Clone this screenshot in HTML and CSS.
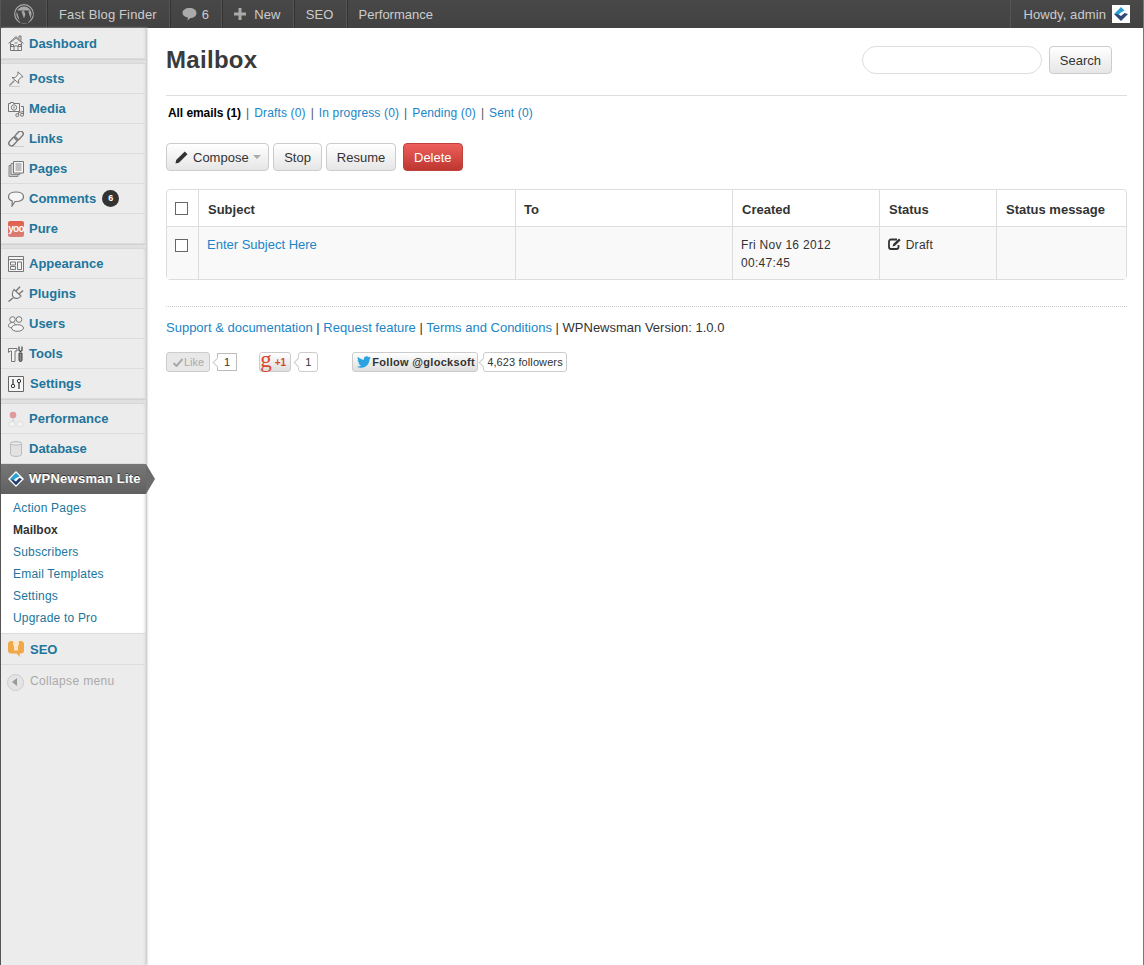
FILE: index.html
```html
<!DOCTYPE html>
<html lang="en">

<head>
  <meta charset="UTF-8">
  <meta name="viewport" content="width=device-width, initial-scale=1.0">
  <title>Mailbox</title>
  <link rel="stylesheet" href="styles.css">
</head>

<body>
  <div id="adminbar">
    <div class="bar-item bar-logo">
      <svg width="20" height="20" viewBox="0 0 20 20">
        <circle cx="10" cy="10" r="9.300" fill="none" stroke="#a8a8a8" stroke-width="1.200" />
        <circle cx="10" cy="10" r="7.600" fill="#a8a8a8" />
        <path d="M2.500 6.500h6.300v.8l-1.300.3 2.500 7 1.400-4.200-1-2.800-.9-.3v-.8h6v.8l-1.200.3 2.400 7 1.300-4.500 .8-1.500L19 11l-5.500 8.500h-7z" fill="#464646" />
      </svg>
    </div>
    <div class="bar-item">Fast Blog Finder</div>
    <div class="bar-item">
      <svg class="bar-icon" width="15" height="14" viewBox="0 0 15 14">
        <path d="M7.500 1c4 0 7 2 7 5s-3 5-6 5l-3 2.500.5-2.700C3 10 .5 8.500 .5 6c0-3 3-5 7-5z" fill="#aaa" />
      </svg>
      6
    </div>
    <div class="bar-item">
      <svg class="bar-icon plus" width="12" height="12" viewBox="0 0 12 12">
        <path d="M4.500 0h3v4.500H12v3H7.500V12h-3V7.500H0v-3h4.500z" fill="#aaa" />
      </svg>
      New
    </div>
    <div class="bar-item">SEO</div>
    <div class="bar-item bar-last">Performance</div>
    <div class="bar-item bar-account">
      Howdy, admin
      <svg class="avatar" width="18" height="18" viewBox="0 0 18 18">
        <rect width="18" height="18" fill="#fff" />
        <path d="M9 2l3.500 3.500L9 7.500 6 10 2 9z" fill="#2a9fd6" />
        <path d="M2 9l7 7 7-7-3.500-1L9 11 6 9z" fill="#2f4a7a" />
      </svg>
    </div>
  </div>

  <div id="layout">
    <div id="sidebar">
      <ul class="menu">
        <li class="menu-item menu-first">
          <svg class="menu-icon" width="16" height="16" viewBox="0 0 16 16">
            <path d="M11 3.500V1h2v4.500" fill="#ddd" stroke="#777" />
            <path d="M.5 8.500L8 1.500l7.500 7M2.500 7.500L8 3l5.500 4.500" fill="none" stroke="#777" />
            <path d="M2.500 8v7.500h11V8" fill="#f2f2f2" stroke="#777" />
            <path d="M6 15.500V11h4v4.500M3 9.500h2.500v2H3zM10.500 9.500H13v2h-2.500zM6.500 8h3" fill="none" stroke="#777" />
          </svg>
          <a href="#">Dashboard</a>
        </li>
      </ul>
      <div class="menu-sep"></div>
      <ul class="menu">
        <li class="menu-item">
          <svg class="menu-icon" width="16" height="16" viewBox="0 0 16 16">
            <path d="M10 .8l5 5-1.800.3-2.700 3 .3 3.200L4 6.500l3.100.2 2.700-3z" fill="#f2f2f2" stroke="#777" />
            <path d="M6.500 9.500L1.500 14.500" stroke="#888" stroke-width="1.300" />
            <path d="M1 15.500h11" stroke="#ccc" />
          </svg>
          <a href="#">Posts</a>
        </li>
        <li class="menu-item">
          <svg class="menu-icon" width="16" height="16" viewBox="0 0 16 16">
            <path d="M.5 2.500h2v-1h3v1h6v8H.5z" fill="#f2f2f2" stroke="#777" />
            <circle cx="6" cy="6.500" r="2.700" fill="none" stroke="#777" />
            <circle cx="6" cy="6.500" r="1" fill="#999" />
            <path d="M13 5.500h2.500v8M10.500 14v-2.500l5-1" fill="none" stroke="#777" />
            <circle cx="9.300" cy="14.200" r="1.500" fill="none" stroke="#777" />
            <circle cx="14" cy="13.800" r="1.500" fill="none" stroke="#777" />
          </svg>
          <a href="#">Media</a>
        </li>
        <li class="menu-item">
          <svg class="menu-icon" width="16" height="16" viewBox="0 0 16 16">
            <rect x="8.200" y="-.5" width="5.400" height="10" rx="2.700" transform="rotate(42 10.900 4.500)" fill="none" stroke="#777" stroke-width="1.400" />
            <rect x="2.400" y="5.500" width="5.400" height="10" rx="2.700" transform="rotate(42 5.100 10.500)" fill="none" stroke="#777" stroke-width="1.400" />
            <path d="M5 15.500h11" stroke="#ccc" />
          </svg>
          <a href="#">Links</a>
        </li>
        <li class="menu-item">
          <svg class="menu-icon" width="16" height="16" viewBox="0 0 16 16">
            <path d="M1 4.500h9v11H1z" fill="#ccc" stroke="#888" />
            <path d="M3 2.500h9v11H3z" fill="#ddd" stroke="#888" />
            <path d="M5.500 .5h10v11.500h-10z" fill="#f6f6f6" stroke="#777" />
            <path d="M7.500 3h6M7.500 5h6M7.500 7h6M7.500 9h6" stroke="#888" />
          </svg>
          <a href="#">Pages</a>
        </li>
        <li class="menu-item">
          <svg class="menu-icon" width="16" height="16" viewBox="0 0 16 16">
            <path d="M8 1c4.200 0 7.500 1.800 7.500 4.700S12.200 10.500 8.500 10.500H7L4 15l.3-5C2 9.300.5 7.800.5 5.700.5 2.800 3.800 1 8 1z" fill="#f6f6f6" stroke="#777" stroke-width="1.200" />
          </svg>
          <a href="#">Comments</a>
          <span class="count">6</span>
        </li>
        <li class="menu-item">
          <span class="yoo">yoo</span>
          <a href="#">Pure</a>
        </li>
      </ul>
      <div class="menu-sep"></div>
      <ul class="menu">
        <li class="menu-item">
          <svg class="menu-icon" width="16" height="16" viewBox="0 0 16 16">
            <path d="M.5 .5h15v15H.5zM.5 3.500h15" fill="#f4f4f4" stroke="#777" />
            <path d="M2.500 6h5v3h-5zM2.500 10.500h5v3h-5zM9.500 6h4v7.500h-4z" fill="none" stroke="#777" />
          </svg>
          <a href="#">Appearance</a>
        </li>
        <li class="menu-item">
          <svg class="menu-icon" width="16" height="16" viewBox="0 0 16 16">
            <path d="M6 3.500l7 6.500c-2 2.700-5.500 3-7.500 1.300C3.800 9.800 4 6 6 3.500z" fill="#f2f2f2" stroke="#777" stroke-width="1.200" />
            <path d="M8 5L12 .8M11 8l4.200-3.500M5 12L.5 15.500" fill="none" stroke="#777" stroke-width="1.400" />
          </svg>
          <a href="#">Plugins</a>
        </li>
        <li class="menu-item">
          <svg class="menu-icon" width="16" height="16" viewBox="0 0 16 16">
            <circle cx="4.500" cy="3.500" r="2.800" fill="#f4f4f4" stroke="#777" />
            <circle cx="11" cy="3.500" r="2.800" fill="#f4f4f4" stroke="#777" />
            <path d="M.5 10c0-2.500 2-3.500 4-3.500s3 1.500 3 3.500-7 2.500-7 0z" fill="#f4f4f4" stroke="#777" />
            <ellipse cx="9.500" cy="12" rx="6" ry="3.300" fill="#f4f4f4" stroke="#777" />
          </svg>
          <a href="#">Users</a>
        </li>
        <li class="menu-item">
          <svg class="menu-icon" width="16" height="16" viewBox="0 0 16 16">
            <path d="M.5 2.500h8.500v2.500H7v10.500H3.500V5H2L.5 6.500z" fill="#f4f4f4" stroke="#777" />
            <path d="M11 .5v4l1.500 1 1.500-1v-4" fill="none" stroke="#444" stroke-width="1.200" />
            <path d="M11 7h3v7a1.500 1.500 0 0 1-3 0z" fill="#888" stroke="#444" />
          </svg>
          <a href="#">Tools</a>
        </li>
        <li class="menu-item item-settings">
          <svg class="menu-icon" width="16" height="16" viewBox="0 0 16 16">
            <path d="M.5 .5h15v15H.5z" fill="#f6f6f6" stroke="#666" />
            <circle cx="5" cy="10" r="1.700" fill="none" stroke="#333" />
            <circle cx="11" cy="5" r="1.700" fill="none" stroke="#333" />
            <path d="M5 3v5.300M11 6.700V13" stroke="#333" stroke-width="1.200" />
          </svg>
          <a href="#">Settings</a>
        </li>
      </ul>
      <div class="menu-sep"></div>
      <ul class="menu">
        <li class="menu-item">
          <svg class="menu-icon" width="16" height="16" viewBox="0 0 16 16">
            <path d="M1 12l3-2 3 2v2.500l-3 1.500-3-1.500zM9 12l3-2 3 2v2.500l-3 1.500-3-1.500z" fill="#f4f4f4" stroke="#ddd" />
            <circle cx="5" cy="4" r="3.300" fill="#e09a9a" />
            <path d="M5 7v4" stroke="#ccc" />
          </svg>
          <a href="#">Performance</a>
        </li>
        <li class="menu-item">
          <svg class="menu-icon" width="16" height="16" viewBox="0 0 16 16">
            <path d="M2.500 2.500c0-2.500 11-2.500 11 0v11c0 2.500-11 2.500-11 0z" fill="#e2e2e2" stroke="#bbb" />
            <path d="M2.500 2.500c0 2 11 2 11 0" fill="#f4f4f4" stroke="#bbb" />
          </svg>
          <a href="#">Database</a>
        </li>
        <li class="menu-item menu-current">
          <svg class="menu-icon" width="16" height="16" viewBox="0 0 16 16">
            <path d="M8 0l8 8-8 8-8-8z" fill="#fff" />
            <path d="M8 1.800l3.700 3.700L8 7 5.500 9.500 2 8z" fill="#2a9fd6" />
            <path d="M2 8l6 6.200L14 8l-2.800-.9L8 10.500 5.500 9z" fill="#1f3a6e" />
          </svg>
          <a href="#">WPNewsman Lite</a>
        </li>
      </ul>
      <ul class="submenu">
        <li><a href="#">Action Pages</a></li>
        <li class="sub-current"><a href="#">Mailbox</a></li>
        <li><a href="#">Subscribers</a></li>
        <li><a href="#">Email Templates</a></li>
        <li><a href="#">Settings</a></li>
        <li><a href="#">Upgrade to Pro</a></li>
      </ul>
      <ul class="menu">
        <li class="menu-item item-seo">
          <svg class="menu-icon" width="16" height="16" viewBox="0 0 16 16">
            <path d="M3 0h10c2 0 3 1.500 3 3.500v6c0 2-1 3-3 3h-1.500l.5 3.500-3.500-3.500H3c-2 0-3-1-3-3v-6C0 1.500 1 0 3 0z" fill="#f0a848" />
            <path d="M5 0h6v3a3 3 0 0 1-1 2v4.500H6V5a3 3 0 0 1-1-2z" fill="#fbe7c8" />
          </svg>
          <a href="#">SEO</a>
        </li>
        <li class="menu-collapse">
          <span class="collapse-btn"><span class="collapse-arrow"></span></span>
          Collapse menu
        </li>
      </ul>
    </div>

    <div id="content">
      <div class="page-head">
        <h1>Mailbox</h1>
        <form class="search-box">
          <input type="text" class="search-input">
          <button type="button" class="btn">Search</button>
        </form>
      </div>

      <div class="filters">
        <b>All emails (1)</b><span class="pipe">|</span><a href="#">Drafts (0)</a><span class="pipe">|</span><a href="#">In progress (0)</a><span class="pipe">|</span><a href="#">Pending (0)</a><span class="pipe">|</span><a href="#">Sent (0)</a>
      </div>

      <div class="toolbar">
        <button type="button" class="btn btn-compose">
          <svg width="13" height="13" viewBox="0 0 13 13">
            <path d="M9.800.5l2.700 2.700-8.600 8.600L.5 12.500l.7-3.400z" fill="#333" />
          </svg>
          Compose
          <span class="caret"></span>
        </button>
        <button type="button" class="btn btn-stop">Stop</button>
        <button type="button" class="btn btn-resume">Resume</button>
        <button type="button" class="btn btn-danger">Delete</button>
      </div>

      <table class="mail-table">
        <thead>
          <tr>
            <th class="col-check"><span class="checkbox"></span></th>
            <th class="col-subject">Subject</th>
            <th class="col-to">To</th>
            <th class="col-created">Created</th>
            <th class="col-status">Status</th>
            <th>Status message</th>
          </tr>
        </thead>
        <tbody>
          <tr>
            <td class="col-check"><span class="checkbox"></span></td>
            <td><a href="#">Enter Subject Here</a></td>
            <td></td>
            <td class="cell-small">Fri Nov 16 2012 00:47:45</td>
            <td class="cell-small">
              <svg class="draft-icon" width="13" height="12" viewBox="0 0 13 12">
                <path d="M9 1.500H3A2 2 0 0 0 1 3.500v5.500a2 2 0 0 0 2 2h5.500a2 2 0 0 0 2-2V7" fill="none" stroke="#333" stroke-width="1.800" />
                <path d="M11 .5L12.700 2.200 7 7.800l-2.500.7.700-2.500z" fill="#333" />
              </svg>
              Draft
            </td>
            <td></td>
          </tr>
        </tbody>
      </table>

      <div class="footer-links">
        <a href="#">Support &amp; documentation</a> | <a href="#">Request feature</a> | <a href="#">Terms and Conditions</a> | WPNewsman Version: 1.0.0
      </div>

      <div class="social">
        <span class="like-btn">
          <svg width="10" height="9" viewBox="0 0 10 9">
            <path d="M.5 5l3 3L9.500 1" fill="none" stroke="#aaa" stroke-width="2" />
          </svg>
          Like
        </span>
        <span class="bubble bubble-square">1</span>
        <span class="gplus-btn"><span class="gplus-g">g</span><span class="gplus-one">+1</span></span>
        <span class="bubble bubble-gplus">1</span>
        <span class="tw-btn">
          <svg width="14" height="12" viewBox="0 0 16 13">
            <path d="M16 1.600c-.6.300-1.200.4-1.900.5.700-.4 1.200-1 1.400-1.800-.6.400-1.300.6-2.100.8C12.800.400 12 0 11 0 9.200 0 7.700 1.500 7.700 3.300c0 .3 0 .5.100.8C5.100 3.900 2.700 2.600 1.100.6.800 1.100.700 1.700.700 2.300c0 1.100.6 2.100 1.500 2.700-.5 0-1-.2-1.500-.4 0 1.600 1.100 2.900 2.600 3.200-.5.100-1 .2-1.500.1.400 1.300 1.600 2.200 3.100 2.300C3.300 11.400 1.700 12 0 11.800 1.500 12.700 3.200 13 5 13c6 0 9.300-5 9.300-9.300v-.4c.7-.4 1.200-1 1.700-1.700z" fill="#2aa3e0" />
          </svg>
          Follow @glocksoft
        </span>
        <span class="bubble bubble-followers">4,623 followers</span>
      </div>
    </div>
  </div>
</body>

</html>
```

FILE: styles.css
```css
html, body {
  height: 100%;
}

body {
  margin: 0;
  font-family: "Liberation Sans", Arial, sans-serif;
  font-size: 12px;
  color: #333;
  background: #fff;
  border-left: 1px solid #555;
  border-right: 1px solid #777;
  box-sizing: border-box;
  display: flex;
  flex-direction: column;
  overflow: hidden;
}

a {
  color: #21759b;
  text-decoration: none;
}

ul {
  list-style: none;
  margin: 0;
  padding: 0;
}

/* Top admin bar */
#adminbar {
  height: 28px;
  flex: none;
  display: flex;
  background: linear-gradient(#484848, #424242);
  color: #ccc;
  font-size: 13px;
  letter-spacing: 0.15px;
}

.bar-item {
  display: flex;
  align-items: center;
  padding: 0 12px;
  border-right: 1px solid #555;
  box-shadow: 1px 0 0 #333;
}

.bar-logo {
  width: 46px;
  padding: 0;
  justify-content: center;
  box-sizing: border-box;
}

.bar-icon {
  margin-right: 5px;
}

.plus {
  margin-right: 8px;
}

.bar-last {
  border-right: none;
  box-shadow: none;
  letter-spacing: 0;
}

.bar-account {
  margin-left: auto;
  border-right: none;
  border-left: 1px solid #555;
  box-shadow: none;
  padding: 0 13px 0 12px;
  letter-spacing: 0.1px;
}

.avatar {
  margin-left: 6px;
}

/* Left menu */
#layout {
  flex: 1;
  display: flex;
  min-height: 0;
}

#sidebar {
  width: 145px;
  flex: none;
  background: #ececec;
  box-shadow: 1px 0 2px #bbb, inset -3px 0 3px -2px #d4d4d4;
  position: relative;
}

.menu-item {
  height: 29px;
  display: flex;
  align-items: center;
  padding-left: 7px;
  border-bottom: 1px solid #dcdcdc;
  font-size: 13px;
  font-weight: bold;
}

.menu-icon {
  margin-right: 5px;
  flex: none;
}

.menu-first {
  height: 30px;
}

.menu-sep {
  height: 5px;
  background: #e0e0e0;
  border-top: 1px solid #d2d2d2;
  border-bottom: 1px solid #d8d8d8;
  box-sizing: border-box;
}

.count {
  margin-left: 6px;
  width: 17px;
  height: 17px;
  line-height: 17px;
  border-radius: 50%;
  background: #333;
  color: #fff;
  font-size: 9px;
  text-align: center;
}

.yoo {
  width: 16px;
  height: 16px;
  margin-right: 5px;
  background: linear-gradient(#e0604a, #d88078);
  border-radius: 2px;
  color: #fff;
  font-size: 10px;
  font-weight: bold;
  line-height: 15px;
  text-align: center;
  letter-spacing: -0.7px;
}

.item-settings a,
.item-seo a {
  margin-left: 1px;
}

.menu-current {
  height: 29px;
  padding-bottom: 1px;
  position: relative;
  border-bottom: 0;
  background: linear-gradient(#777, #606060);
}

.menu-current a {
  color: #fff;
  letter-spacing: 0.25px;
  text-shadow: 0 -1px 0 #333;
}

.menu-current:after {
  content: "";
  position: absolute;
  left: 100%;
  top: 0;
  border-left: 9px solid #6b6b6b;
  border-top: 15px solid transparent;
  border-bottom: 15px solid transparent;
}

.submenu {
  background: #fff;
  padding: 3px 0 4px;
  border-bottom: 1px solid #dcdcdc;
  box-shadow: inset -3px 0 3px -2px #d4d4d4;
}

.submenu li {
  height: 22px;
  line-height: 22px;
  padding-left: 12px;
  letter-spacing: 0.2px;
}

.sub-current a {
  color: #333;
  font-weight: bold;
  letter-spacing: 0;
}

.item-seo {
  height: 30px;
}

.menu-collapse {
  height: 32px;
  padding-bottom: 1px;
  display: flex;
  align-items: center;
  padding-left: 6px;
  color: #aaa;
  letter-spacing: 0.35px;
}

.collapse-btn {
  width: 17px;
  height: 17px;
  margin: 2px 6px 0 0;
  border-radius: 50%;
  border: 1px solid #ccc;
  box-sizing: border-box;
  background: #e4e4e4;
  display: flex;
  align-items: center;
  justify-content: center;
}

.collapse-arrow {
  border-right: 5px solid #999;
  border-top: 4px solid transparent;
  border-bottom: 4px solid transparent;
  margin-left: -2px;
}

/* Main content */
#content {
  flex: 1;
  padding: 0 16px 0 20px;
}

.page-head {
  height: 67px;
  display: flex;
  align-items: flex-start;
  justify-content: space-between;
  border-bottom: 1px solid #ddd;
}

h1 {
  margin: 17px 0 0;
  font-size: 24px;
  line-height: 30px;
  letter-spacing: 0.3px;
  color: #3a3a3a;
}

.search-box {
  margin: 18px 15px 0 0;
  display: flex;
  gap: 7px;
}

.search-input {
  width: 180px;
  height: 28px;
  box-sizing: border-box;
  border: 1px solid #ddd;
  border-radius: 14px;
  background: #fff;
}

.filters {
  margin-top: 10px;
  padding-left: 2px;
  height: 15px;
  line-height: 15px;
  color: #333;
}

.filters a {
  color: #2085c7;
  letter-spacing: 0.15px;
}

.filters b {
  color: #000;
  letter-spacing: -0.07px;
}

.pipe {
  margin: 0 5px;
  color: #555;
}

.toolbar {
  margin-top: 22px;
  display: flex;
  gap: 4px;
}

.btn {
  height: 28px;
  padding: 0 10px;
  font-family: inherit;
  font-size: 13px;
  color: #333;
  border: 1px solid #ccc;
  border-radius: 4px;
  background: linear-gradient(#fff, #e6e6e6);
  display: inline-flex;
  align-items: center;
  justify-content: center;
  box-sizing: border-box;
}

.btn-compose {
  width: 103px;
  padding: 0 0 0 8px;
  gap: 5px;
  justify-content: flex-start;
}

.btn-stop {
  width: 49px;
}

.btn-resume {
  width: 70px;
}

.caret {
  margin-left: -1px;
  border-top: 4px solid #aaa;
  border-left: 4px solid transparent;
  border-right: 4px solid transparent;
}

.btn-danger {
  margin-left: 3px;
  color: #fff;
  border-color: #c0403c;
  background: linear-gradient(#ee5f5b, #bd362f);
}

/* Mail table */
.mail-table {
  width: 961px;
  margin-top: 18px;
  table-layout: fixed;
  border-collapse: separate;
  border-spacing: 0;
  border: 1px solid #ddd;
  border-radius: 4px;
  font-size: 13px;
}

.mail-table th,
.mail-table td {
  text-align: left;
  vertical-align: top;
  padding: 9px 8px 7px;
  line-height: 18px;
  border-left: 1px solid #ddd;
}

.mail-table th {
  height: 19px;
  padding: 11px 8px 6px 9px;
  color: #333;
  font-weight: bold;
  border-bottom: 1px solid #ddd;
}

.mail-table th:first-child,
.mail-table td:first-child {
  border-left: none;
}

.mail-table td {
  background: #f9f9f9;
}

.mail-table a {
  color: #2085c7;
}

.mail-table .col-to {
  padding-left: 8px;
}

.mail-table .cell-small {
  font-size: 12px;
  letter-spacing: 0.3px;
}

.col-check {
  width: 15px;
}

.mail-table .col-check {
  padding-left: 8px;
}

.col-subject {
  width: 299px;
}

.col-to {
  width: 200px;
}

.col-created {
  width: 129px;
}

.col-status {
  width: 99px;
}

.checkbox {
  display: block;
  width: 13px;
  height: 13px;
  box-sizing: border-box;
  margin-top: 3px;
  border: 1px solid #666;
  background: #fff;
}

th .checkbox {
  margin-top: 1px;
}

.draft-icon {
  vertical-align: -1px;
  margin-right: 1px;
}

.footer-links {
  margin-top: 26px;
  padding-top: 13px;
  border-top: 1px dotted #ccc;
  line-height: 16px;
  font-size: 13px;
}

.footer-links a {
  color: #2085c7;
}

/* Social buttons */
.social {
  margin-top: 16px;
  height: 20px;
  display: flex;
  align-items: center;
  font-size: 11px;
}

.like-btn,
.gplus-btn,
.tw-btn {
  height: 20px;
  box-sizing: border-box;
  border: 1px solid #ccc;
  border-radius: 3px;
  display: inline-flex;
  align-items: center;
  background: linear-gradient(#fff, #dedede);
}

.like-btn {
  width: 44px;
  padding-left: 6px;
  color: #aaa;
  background: #e8e8e8;
  gap: 1px;
}

.bubble {
  position: relative;
  height: 20px;
  box-sizing: border-box;
  margin-left: 6px;
  padding: 0 7px;
  border: 1px solid #ccc;
  border-radius: 3px;
  background: #fff;
  line-height: 18px;
}

.bubble:before {
  content: "";
  position: absolute;
  left: -4px;
  top: 6px;
  width: 6px;
  height: 6px;
  background: #fff;
  border-left: 1px solid #ccc;
  border-bottom: 1px solid #ccc;
  transform: rotate(45deg);
}

.bubble-square {
  height: 18px;
  line-height: 16px;
  padding: 0 6px;
  border-radius: 0;
  border-color: #bbb;
  margin-left: 7px;
}

.bubble-square:before {
  top: 5px;
}

.gplus-btn {
  width: 32px;
  margin-left: 22px;
}

.gplus-g {
  font-family: "Liberation Serif", serif;
  color: #d9472b;
  font-size: 23px;
  line-height: 15px;
  margin-top: -5px;
  margin-right: 3px;
}

.gplus-one {
  color: #d9472b;
  font-weight: bold;
  font-size: 10px;
}

.bubble-gplus {
  margin-left: 7px;
  padding: 0 6px;
}

.tw-btn {
  margin-left: 34px;
  width: 126px;
  padding-left: 4px;
  gap: 1px;
  color: #333;
  font-weight: bold;
  letter-spacing: 0.3px;
}

.bubble-followers {
  margin-left: 5px;
  padding: 0 3px;
  letter-spacing: 0.1px;
}
```
